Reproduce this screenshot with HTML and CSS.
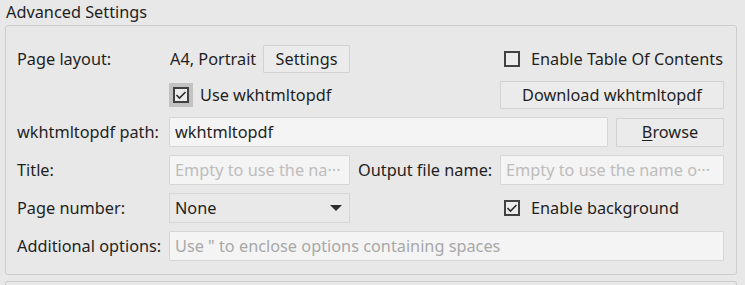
FILE: index.html
```html
<!DOCTYPE html>
<html lang="en">
<head>
  <meta charset="UTF-8" />
  <title>Advanced Settings</title>
  <link rel="stylesheet" href="styles.css">
</head>
<body>
  <div class="group-title">Advanced Settings</div>
  <div class="group-box">
    <div class="form-grid">

      <div class="label">Page layout:</div>
      <div class="layout-cell">
        <span class="layout-value">A4, Portrait</span>
        <button class="btn btn-settings">Settings</button>
      </div>
      <div></div>
      <label class="check">
        <span class="box"></span>
        <span>Enable Table Of Contents</span>
      </label>

      <div></div>
      <label class="check check-focus">
        <span class="box-wrap">
          <span class="box"><svg viewBox="0 0 12 12"><polyline points="1.5,6 4.5,9 10.5,3"/></svg></span>
        </span>
        <span>Use wkhtmltopdf</span>
      </label>
      <div></div>
      <button class="btn">Download wkhtmltopdf</button>

      <div class="label">wkhtmltopdf path:</div>
      <div class="path-cell">
        <input class="field" type="text" value="wkhtmltopdf">
        <button class="btn btn-browse"><u>B</u>rowse</button>
      </div>

      <div class="label">Title:</div>
      <input class="field" type="text" placeholder="Empty to use the na&middot;&middot;&middot;">
      <div class="label">Output file name:</div>
      <input class="field" type="text" placeholder="Empty to use the name o&middot;&middot;&middot;">

      <div class="label">Page number:</div>
      <div class="combo">
        <span>None</span>
        <span class="arrow"></span>
      </div>
      <div></div>
      <label class="check">
        <span class="box"><svg viewBox="0 0 12 12"><polyline points="1.5,6 4.5,9 10.5,3"/></svg></span>
        <span>Enable background</span>
      </label>

      <div class="label">Additional options:</div>
      <input class="field field-wide" type="text" placeholder="Use &quot; to enclose options containing spaces">

    </div>
  </div>
  <div class="next-box"></div>
</body>
</html>
```

FILE: styles.css
```css
body {
  background-color: #e8e8e8;
  color: #1f1f1f;
  font-family: 'Noto Sans', 'Open Sans', sans-serif;
  font-size: 16.3px;
  margin: 0;
  padding: 0 8px 0 5px;
  height: 285px;
  box-sizing: border-box;
  overflow: hidden;
}

.group-title {
  height: 25px;
  line-height: 24px;
  padding-left: 1px;
}

.group-box {
  border: 1px solid #cdcdcd;
  border-radius: 3px;
  height: 229px;
  padding: 19px 0 0 11px;
  box-sizing: content-box;
}

.form-grid {
  display: grid;
  grid-template-columns: 144px 181px 134px 224px;
  grid-template-rows: 28px 28px 30px 30px 30px 30px;
  column-gap: 8px;
  row-gap: 8px;
  align-items: center;
}

.label {
  white-space: nowrap;
}

.layout-cell {
  display: flex;
  align-items: center;
  justify-content: space-between;
  height: 100%;
}

.layout-value {
  padding-left: 1px;
}

.btn {
  font-family: inherit;
  font-size: 16.3px;
  color: #1f1f1f;
  background-color: #ebebeb;
  border: 1px solid #d2d2d2;
  border-radius: 1px;
  height: 28px;
  padding: 0;
  width: 100%;
}

.btn-settings {
  width: 87px;
}

.btn-browse {
  width: 108px;
  height: 29px;
  flex-shrink: 0;
}

.btn u {
  text-underline-offset: 2px;
}

.check {
  display: flex;
  align-items: center;
  gap: 11px;
  padding-left: 4px;
  white-space: nowrap;
}

.check-focus {
  padding-left: 0;
  gap: 7px;
}

.box-wrap {
  display: flex;
  padding: 4px;
  background-color: #c2c2c2;
}

.box {
  display: block;
  width: 16px;
  height: 16px;
  box-sizing: border-box;
  border: 2px solid #414141;
  background-color: #ececec;
}

.box svg {
  display: block;
  width: 12px;
  height: 12px;
  fill: none;
  stroke: #2b2b2b;
  stroke-width: 1.6;
}

.path-cell {
  grid-column: 2 / 5;
  display: flex;
  gap: 8px;
  align-items: center;
}

.field {
  font-family: inherit;
  font-size: 16.3px;
  color: #1f1f1f;
  background-color: #f4f4f4;
  border: 1px solid #d6d6d6;
  border-radius: 1px;
  height: 30px;
  box-sizing: border-box;
  padding: 0 5px;
  width: 100%;
  min-width: 0;
  outline: none;
}

.field::placeholder {
  color: #bdbdbd;
}

.field-wide {
  grid-column: 2 / 5;
}

.field-wide::placeholder {
  color: #a8a8a8;
}

.combo {
  display: flex;
  align-items: center;
  justify-content: space-between;
  height: 30px;
  box-sizing: border-box;
  border: 1px solid #d6d6d6;
  background-color: #e9e9e9;
  padding: 0 7px 0 5px;
}

.arrow {
  width: 0;
  height: 0;
  border-left: 6px solid transparent;
  border-right: 6px solid transparent;
  border-top: 6px solid #2e2e2e;
}

.next-box {
  margin-top: 6px;
  height: 3px;
  border: 1px solid #cdcdcd;
  border-bottom: none;
  border-radius: 3px 3px 0 0;
}
```
